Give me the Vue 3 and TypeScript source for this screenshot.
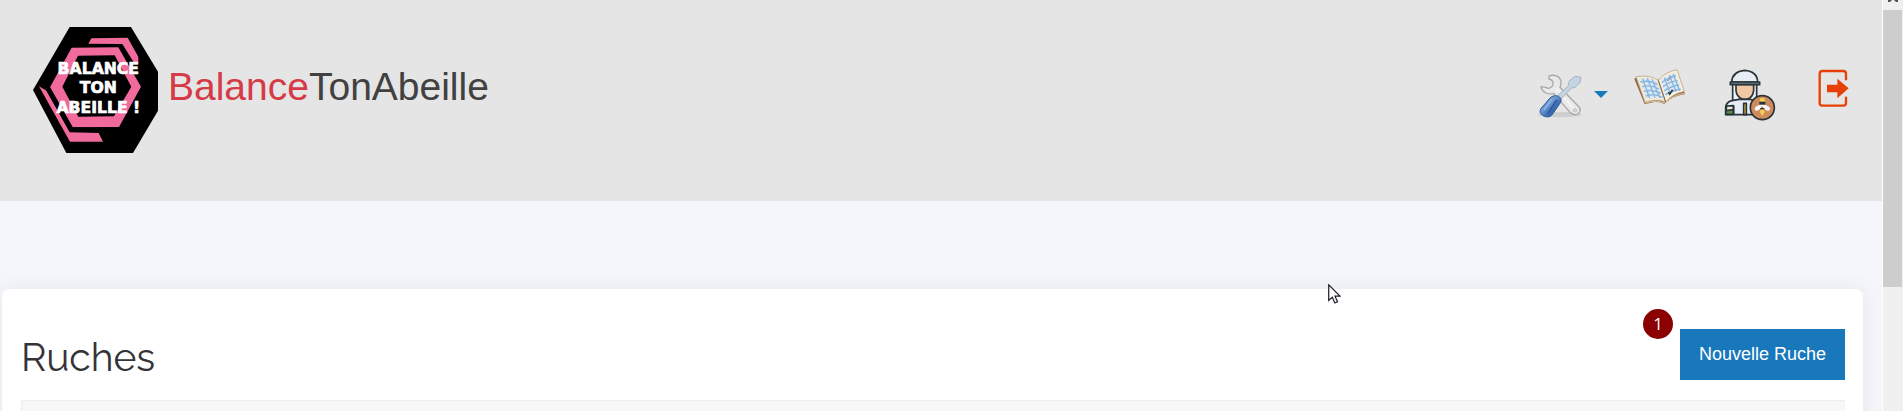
<script setup lang="ts">
const logoLines: { text: string; y: number }[] = [
  { text: 'BALANCE', y: 176 },
  { text: 'TON', y: 235 },
  { text: 'ABEILLE !', y: 293 },
]
</script>

<template>
  <div class="page">
    <div class="content">
      <header class="header">
        <a class="brand" href="#" aria-label="BalanceTonAbeille">
          <svg class="logo" viewBox="39 36 375 378" aria-hidden="true">
            <path d="M149 36H333L414 170V287L339 414H139L39 225Z" />
            <g fill="#f06a9b">
              <path fill-rule="evenodd" d="M155 98L295 97L363 215L297 336L158 337L90 217ZM174 122L127 215L175 305L282 304L334 215L284 121Z" />
              <path d="M214 70L323 68L355 125V146L343 145L307 87L205 86Z" />
              <path d="M57 214L80 227L149 352L236 354L249 380H150Z" />
            </g>
            <path d="M78 203L90 217L158 337L253 338V351H150L76 222Z" />
            <text v-for="line in logoLines" :key="line.text" x="235" :y="line.y">{{ line.text }}</text>
          </svg>
          <span class="name"><span class="accent">Balance</span>TonAbeille</span>
        </a>

        <nav class="nav">
          <button class="tools" type="button" aria-label="Outils">
            <svg width="46" height="50" viewBox="48 27 138 150" aria-hidden="true">
              <defs>
                <linearGradient id="handle" x1="0" y1="0" x2="1" y2="1">
                  <stop offset="0" stop-color="#3c6fb2" />
                  <stop offset=".4" stop-color="#6f9ad4" />
                  <stop offset=".6" stop-color="#3f70b5" />
                  <stop offset="1" stop-color="#224c87" />
                </linearGradient>
              </defs>
              <ellipse cx="120" cy="164" rx="65" ry="8" fill="#cfcfcf" />
              <path d="M87 48C98 43 117 46 122 60C126 70 122 77 120 82L177 141C185 150 179 163 167 164C159 165 154 161 148 155L101 100C86 105 67 99 63 80L79 83C86 88 97 82 99 73C101 65 96 59 87 57Z" fill="#e9e9e9" stroke="#a8a8a8" stroke-width="4" stroke-linejoin="round" />
              <path d="M108 86L162 146" stroke="#f8f8f8" stroke-width="4" />
              <circle cx="165" cy="151" r="5" fill="#ddd" stroke="#aaa" stroke-width="2" />
              <path d="M114 106L146 77L147 64L164 49L183 52L180 68L165 82L155 84L124 116Z" fill="#c6d4e2" stroke="#a4b3c2" stroke-width="3" />
              <path d="M90 114C96 107 106 106 113 108C121 111 126 119 122 127L98 162C91 174 76 172 68 166C58 160 59 151 64 144Z" fill="url(#handle)" stroke="#345e99" stroke-width="3" />
              <path d="M96 118L72 149" stroke="#8fb2e2" stroke-width="5" stroke-linecap="round" />
              <path d="M110 121L85 158" stroke="#2d5b9d" stroke-width="5" stroke-linecap="round" />
            </svg>
            <svg width="14" height="7" viewBox="0 0 14 7" aria-hidden="true"><path d="M0 0H14L7 7Z" fill="#1878bd" /></svg>
          </button>
          <a href="#" aria-label="Carnet">
            <svg width="62" height="36" viewBox="36 27 186 108" aria-hidden="true">
              <path d="M43 57L74 133L104 126Q122 125 133 132Q158 108 194 103L193 96L169 30L112 61L46 53Z" fill="#946b48" />
              <path d="M48 50Q91 43 115 61L137 126Q112 115 75 127Z" fill="#f0e9d8" stroke="#b39872" stroke-width="2" />
              <path d="M115 61Q133 37 171 29L193 94Q155 103 137 126Z" fill="#f5efdf" stroke="#b39872" stroke-width="2" />
              <path d="M59 57Q89 50 108 64L128 116Q104 108 80 117Z" fill="#dfe7ee" />
              <path d="M122 60Q142 44 165 39L184 89Q156 95 138 112Z" fill="#e2e8ee" />
              <path d="M68 56L89 115M82 55L105 113M96 58L119 113M61 66Q90 59 112 74M66 80Q94 73 117 87M72 94Q99 87 122 100M77 108Q104 99 127 112M133 53L151 101M148 45L168 95M159 42L179 92M125 68Q146 51 168 48M129 80Q152 64 173 62M133 92Q157 77 177 75M136 104Q160 90 182 87" fill="none" stroke="#85b6e2" stroke-width="4" />
              <path d="M115 62L137 126" stroke="#7d664a" stroke-width="3" />
              <path d="M76 129Q112 119 135 129Q157 107 191 100" fill="none" stroke="#dcc8a6" stroke-width="3" />
              <path d="M141 60L145 62L153 49" fill="none" stroke="#7d8791" stroke-width="3" />
              <path d="M145 97L149 102L158 89" fill="none" stroke="#303a45" stroke-width="5" />
            </svg>
          </a>
          <a href="#" aria-label="Apiculteur">
            <svg width="68" height="52" viewBox="24 27 204 156" aria-hidden="true">
              <g stroke="#28343b" stroke-width="5" stroke-linejoin="round">
                <path d="M68 69H140V122H68Z" fill="#f0f3f8" />
                <path d="M47 164V143Q48 126 66 122L87 118H121L145 125V164Z" fill="#e6ebf4" />
                <path d="M78 73H131V91Q129 112 112 117H97Q80 111 78 92Z" fill="#f1c6a2" />
                <path d="M65 66Q67 34 104 31Q142 34 143 66Z" fill="#e7ecf5" />
                <path d="M61 66H149V74H61Z" fill="#6f7e88" />
                <path d="M48 151L70 147V163H47Z" fill="#648e43" />
                <path d="M50 138L70 137V149L48 152Z" fill="#f1ead4" />
                <path d="M71 136V164" fill="none" />
                <path d="M101 130H109V164H101Z" fill="#f6c83d" />
                <circle cx="157" cy="143" r="36" fill="#ce8c5c" />
              </g>
              <path d="M152 133L136 141Q131 149 138 152Q147 154 156 138Q167 154 176 152Q183 148 178 141L162 133Z" fill="#f7f8f9" />
              <rect x="149" y="114" width="16" height="15" rx="6" fill="#f5ce55" />
              <path d="M148 125H166V134H148Z" fill="#28343b" />
              <path d="M157 143L165 155L157 168L149 155Z" fill="#f5ce55" />
              <path d="M151 146H163" stroke="#28343b" stroke-width="4" />
            </svg>
          </a>
          <a href="#" aria-label="Déconnexion">
            <svg width="40" height="39" viewBox="30 42 120 117" aria-hidden="true">
              <path d="M138 76V56Q138 48 130 48H67Q59 48 59 56V144Q59 152 67 152H130Q138 152 138 144V125" fill="none" stroke="#e74007" stroke-width="7" />
              <path d="M81 89H112V71L146 100L112 130V112H81Z" fill="#e74007" />
            </svg>
          </a>
        </nav>
      </header>

      <main class="card">
        <div class="card-head">
          <h1>Ruches</h1>
          <div class="action">
            <button class="new" type="button">Nouvelle Ruche</button>
            <span class="badge">1</span>
          </div>
        </div>
        <div class="list"></div>
      </main>
    </div>

    <div class="scrollbar" aria-hidden="true">
      <svg class="arrow" viewBox="0 0 20 10"><path d="M5 2V0L10 -4L15 0V2L13 2L10 -1L7 2Z" fill="#505050" /></svg>
      <div class="thumb"></div>
    </div>

    <svg class="cursor" viewBox="0 0 13 20" aria-hidden="true">
      <path d="M.7 .8V16.5L4.3 13.2L6.9 19L9.5 17.8L7 12.2H12Z" fill="#fff" stroke="#1c1c28" stroke-width="1.2" />
    </svg>
  </div>
</template>

<style>
body {
  margin: 0;
}
</style>

<style scoped>
.page {
  position: relative;
  display: flex;
  height: 100vh;
  overflow: hidden;
  background: #f5f6fb;
  font-family: "Liberation Sans", Arial, sans-serif;
}
.content {
  flex: 1;
  min-width: 0;
  display: flex;
  flex-direction: column;
}
.header {
  display: flex;
  flex-shrink: 0;
  justify-content: space-between;
  align-items: flex-start;
  height: 201px;
  box-sizing: border-box;
  padding: 27px 32px 0 33px;
  background: #e5e5e5;
}
.brand {
  display: flex;
  gap: 10px;
  color: #414141;
  text-decoration: none;
}
.logo {
  width: 125px;
  height: 126px;
}
.logo text {
  font: bold 47px "DejaVu Sans", sans-serif;
  text-anchor: middle;
  fill: #fff;
  stroke: #fff;
  stroke-width: 2px;
}
.name {
  padding-top: 36px;
  font-size: 39px;
  line-height: 48px;
}
.accent {
  color: #d63a47;
}
.nav {
  display: flex;
  align-items: flex-start;
  gap: 24px;
  padding-top: 42px;
}
.nav svg {
  display: block;
}
.tools {
  display: flex;
  align-items: center;
  gap: 12px;
  padding: 0;
  border: 0;
  background: none;
}
.card {
  flex: 1;
  margin: 88px 19px 0 2px;
  padding: 40px 18px 0 19px;
  border-radius: 8px 8px 0 0;
  background: #fff;
  box-shadow: 0 0 20px rgba(40, 45, 80, .08);
}
.card-head {
  display: flex;
  justify-content: space-between;
  height: 71px;
}
h1 {
  margin: 0;
  padding-top: 4px;
  color: #343438;
  font: 400 39px/48px Raleway, Lato, sans-serif;
}
.action {
  position: relative;
}
.new {
  height: 51px;
  padding: 0 19px;
  border: 0;
  background: #1878bb;
  color: #fff;
  font: 18px "Liberation Sans", Arial, sans-serif;
}
.badge {
  position: absolute;
  top: -20px;
  right: 172px;
  width: 30px;
  border-radius: 50%;
  background: #8b0000;
  color: #fff;
  font: 17px/30px "Open Sans", sans-serif;
  text-align: center;
}
.list {
  height: 40px;
  border-top: 1px solid #eee;
  border-left: 1px solid #eee;
  background: #f7f7f7;
}
.scrollbar {
  width: 20px;
  border-left: 1px solid #fff;
  background: #f0f0f0;
}
.arrow {
  display: block;
  width: 20px;
  height: 10px;
}
.thumb {
  height: 277px;
  margin-right: 1px;
  background: #cdcdcd;
}
.cursor {
  position: absolute;
  left: 1328px;
  top: 284px;
  width: 13px;
  height: 20px;
}
</style>
